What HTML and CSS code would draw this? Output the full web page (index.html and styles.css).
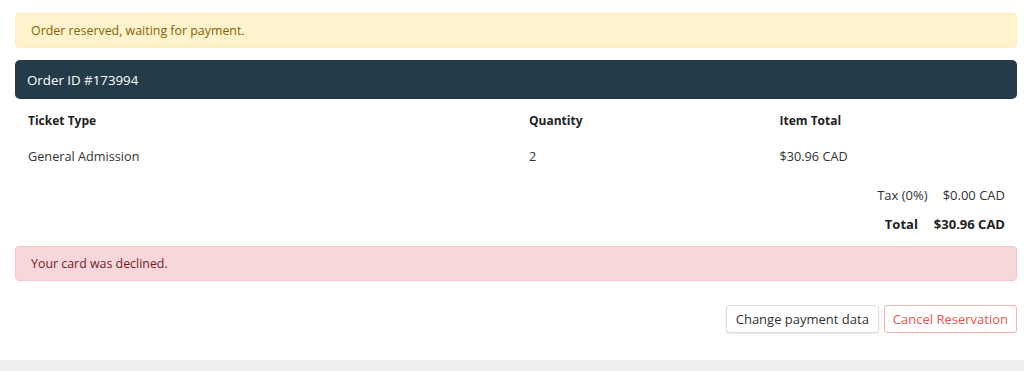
FILE: index.html
```html
<!DOCTYPE html>
<html lang="en">
<head>
    <meta charset="UTF-8">
    <title>Order</title>
    <link rel="stylesheet" href="styles.css">
</head>
<body>

<div class="card">
    <div class="alert alert-warning">Order reserved, waiting for payment.</div>

    <div class="order-header">Order ID #173994</div>

    <table class="order-table">
        <thead>
            <tr>
                <th class="col-type">Ticket Type</th>
                <th class="col-qty">Quantity</th>
                <th class="col-total">Item Total</th>
            </tr>
        </thead>
        <tbody>
            <tr>
                <td>General Admission</td>
                <td>2</td>
                <td>$30.96 CAD</td>
            </tr>
        </tbody>
    </table>

    <div class="summary">
        <div class="summary-row">
            <span>Tax (0%)</span>
            <span>$0.00 CAD</span>
        </div>
        <div class="summary-row grand">
            <span>Total</span>
            <span>$30.96 CAD</span>
        </div>
    </div>

    <div class="alert alert-danger">Your card was declined.</div>

    <div class="actions">
        <button class="btn btn-light">Change payment data</button>
        <button class="btn btn-outline-danger">Cancel Reservation</button>
    </div>
</div>

</body>
</html>
```

FILE: styles.css
```css
body {
    margin: 0;
    background-color: #eeeeee;
    font-family: "Open Sans", sans-serif;
    font-size: 13px;
    color: #333;
}
.card {
    background-color: #fff;
    padding: 13px 7px 27px 15px;
    border-left: 1px solid #f0f0f0;
    box-shadow: 0 1px 3px rgba(0, 0, 0, 0.06);
    margin-left: -1px;
}
.alert {
    height: 35px;
    box-sizing: border-box;
    padding: 0 15px;
    display: flex;
    align-items: center;
    border-radius: 4px;
    border: 1px solid transparent;
    font-size: 12.4px;
}
.alert-warning {
    background-color: #fff3cd;
    border-color: #ffeeba;
    color: #856404;
}
.alert-danger {
    background-color: #f8d7da;
    border-color: #f5c6cb;
    color: #721c24;
    margin-top: 8px;
}
.order-header {
    margin-top: 12px;
    height: 39px;
    display: flex;
    align-items: center;
    padding: 0 12px;
    background-color: #243c4a;
    color: #fff;
    font-size: 13.3px;
    border-radius: 5px;
}
.order-table {
    width: 100%;
    border-collapse: collapse;
    margin-top: 3px;
}
.order-table th,
.order-table td {
    text-align: left;
    padding: 0 13px;
    height: 36px;
}
.order-table th {
    font-weight: 700;
    font-size: 12px;
    color: #222;
}
.order-table td {
    font-size: 12.7px;
}
.col-type {
    width: 50%;
}
.col-qty,
.col-total {
    width: 25%;
}
.summary {
    display: flex;
    flex-direction: column;
    align-items: flex-end;
    padding-right: 12px;
    margin-top: 6px;
}
.summary-row {
    display: flex;
    gap: 15px;
    height: 29px;
    align-items: center;
}
.summary-row.grand {
    font-weight: 700;
    color: #222;
    gap: 16px;
}
.actions {
    display: flex;
    justify-content: flex-end;
    gap: 5px;
    margin-top: 24px;
}
.btn {
    font-family: inherit;
    font-size: 13px;
    height: 28px;
    padding: 0 8px;
    background-color: #fff;
    border-radius: 3px;
    cursor: pointer;
}
.btn-light {
    border: 1px solid #ddd;
    color: #333;
    padding: 0 9px;
    box-shadow: 0 1px 2px rgba(0, 0, 0, 0.1);
}
.btn-outline-danger {
    border: 1px solid #f5b5b5;
    color: #f05252;
}
```
